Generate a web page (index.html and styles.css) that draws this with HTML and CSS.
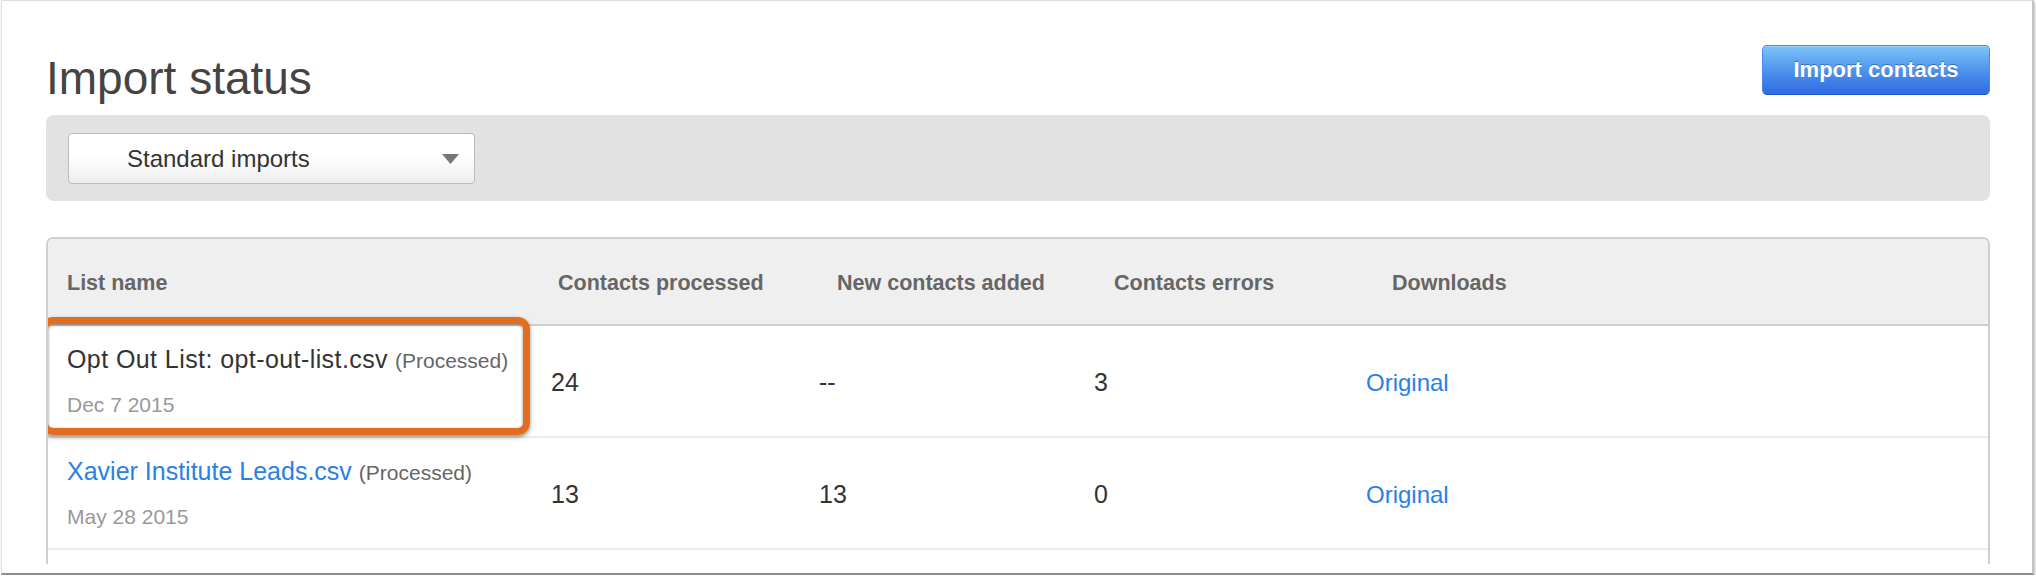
FILE: index.html
```html
<!DOCTYPE html>
<html lang="en">
<head>
<meta charset="utf-8">
<title>Import status</title>
<link rel="stylesheet" href="styles.css">
</head>
<body>
<div class="window">
  <div class="content">
    <div class="top">
      <h1 class="title">Import status</h1>
      <button class="btn-primary" type="button">Import contacts</button>
    </div>
    <div class="filter-bar">
      <div class="select">
        <span class="select-label">Standard imports</span>
        <svg class="caret" width="17" height="10" viewBox="0 0 17 10"><polygon points="0,0 17,0 8.5,10" fill="#777"/></svg>
      </div>
    </div>
    <div class="table">
      <div class="thead">
        <div class="th">List name</div>
        <div class="th">Contacts processed</div>
        <div class="th">New contacts added</div>
        <div class="th">Contacts errors</div>
        <div class="th">Downloads</div>
      </div>
      <div class="trow highlighted">
        <div class="cell name-cell">
          <div class="name"><span class="name-text wide">Opt Out List: opt-out-list.csv</span> <span class="status">(Processed)</span></div>
          <div class="date">Dec 7 2015</div>
        </div>
        <div class="cell num">24</div>
        <div class="cell num">--</div>
        <div class="cell num">3</div>
        <div class="cell"><a class="link dl" href="#">Original</a></div>
        <div class="callout"></div>
      </div>
      <div class="trow">
        <div class="cell name-cell">
          <div class="name"><a class="link name-text" href="#">Xavier Institute Leads.csv</a> <span class="status">(Processed)</span></div>
          <div class="date">May 28 2015</div>
        </div>
        <div class="cell num">13</div>
        <div class="cell num">13</div>
        <div class="cell num">0</div>
        <div class="cell"><a class="link dl" href="#">Original</a></div>
      </div>
    </div>
  </div>
</div>
</body>
</html>
```
FILE: styles.css
```css
* { box-sizing: border-box; }
html, body { margin: 0; padding: 0; background: #fff; }
body { font-family: "Liberation Sans", Arial, Helvetica, sans-serif; color: #333; }

.window {
  margin-left: 1px;
  width: 2033px;
  height: 575px;
  border: 1px solid #dedede;
  border-right: 2px solid #c4c4c4;
  border-bottom: 2px solid #8c8c8c;
  box-shadow: 1px 2px 2px rgba(0,0,0,0.25);
  overflow: hidden;
  background: #fff;
}

.content {
  padding-left: 44px;
  width: 1988px;
}

.top {
  display: flex;
  justify-content: space-between;
  align-items: flex-start;
  padding-top: 44px;
}

.title {
  margin: 7px 0 0 0;
  font-size: 46px;
  line-height: 53px;
  font-weight: normal;
  color: #444;
}

.btn-primary {
  width: 228px;
  height: 50px;
  margin: 0;
  padding: 0;
  border: 1px solid #4a8ae8;
  border-bottom-color: #1d55d4;
  border-radius: 5px;
  background: linear-gradient(#7cc4f9, #4a90ec 55%, #2f6be0);
  color: #fff;
  font-family: "Liberation Sans", Arial, sans-serif;
  font-size: 22px;
  font-weight: bold;
  text-shadow: 0 -1px 0 rgba(10, 40, 120, 0.45);
  box-shadow: inset 0 1px 0 rgba(255,255,255,0.25);
}

.filter-bar {
  margin-top: 10px;
  height: 86px;
  background: #e2e2e2;
  border-radius: 8px;
  padding: 18px 0 0 22px;
}

.select {
  width: 407px;
  height: 51px;
  border: 1px solid #bcbcbc;
  border-radius: 4px;
  background: linear-gradient(#ffffff 45%, #ededed);
  display: flex;
  align-items: center;
  justify-content: space-between;
  padding: 0 15px 0 58px;
}

.select-label {
  font-size: 24px;
  color: #333;
}

.caret { display: block; margin-top: 1px; }

.table {
  margin-top: 36px;
  height: 327px;
  border: 2px solid #cfcfcf;
  border-bottom: none;
  border-radius: 7px 7px 0 0;
  overflow: hidden;
}

.thead {
  display: grid;
  grid-template-columns: 491px 279px 277px 278px 1fr;
  align-items: center;
  height: 87px;
  padding: 3px 0 0 19px;
  background: #efefef;
  border-bottom: 2px solid #cfcfcf;
}

.th {
  font-size: 21.5px;
  font-weight: bold;
  color: #666;
}

.trow {
  position: relative;
  display: grid;
  grid-template-columns: 484px 268px 275px 272px 1fr;
  align-items: center;
  padding: 18px 0 16px 19px;
  border-bottom: 2px solid #ececec;
}

.cell { font-size: 25px; color: #333; }

.name { font-size: 25px; line-height: 30px; white-space: nowrap; }
.name-text { color: #333; }
.name-text.wide { letter-spacing: 0.42px; }
.status { font-size: 21px; color: #666; }
.date { margin-top: 14px; font-size: 21px; line-height: 30px; color: #999; }

.link { color: #2a80e4; text-decoration: none; }
.name .link { color: #2a80e4; }
.dl { font-size: 24px; }

.callout {
  position: absolute;
  left: -7px;
  top: -9px;
  width: 489px;
  height: 118px;
  border: 7px solid #e36d1e;
  border-radius: 12px;
  box-shadow: 0 2px 4px rgba(0,0,0,0.45), inset 0 1px 3px rgba(0,0,0,0.45);
  pointer-events: none;
}
```
